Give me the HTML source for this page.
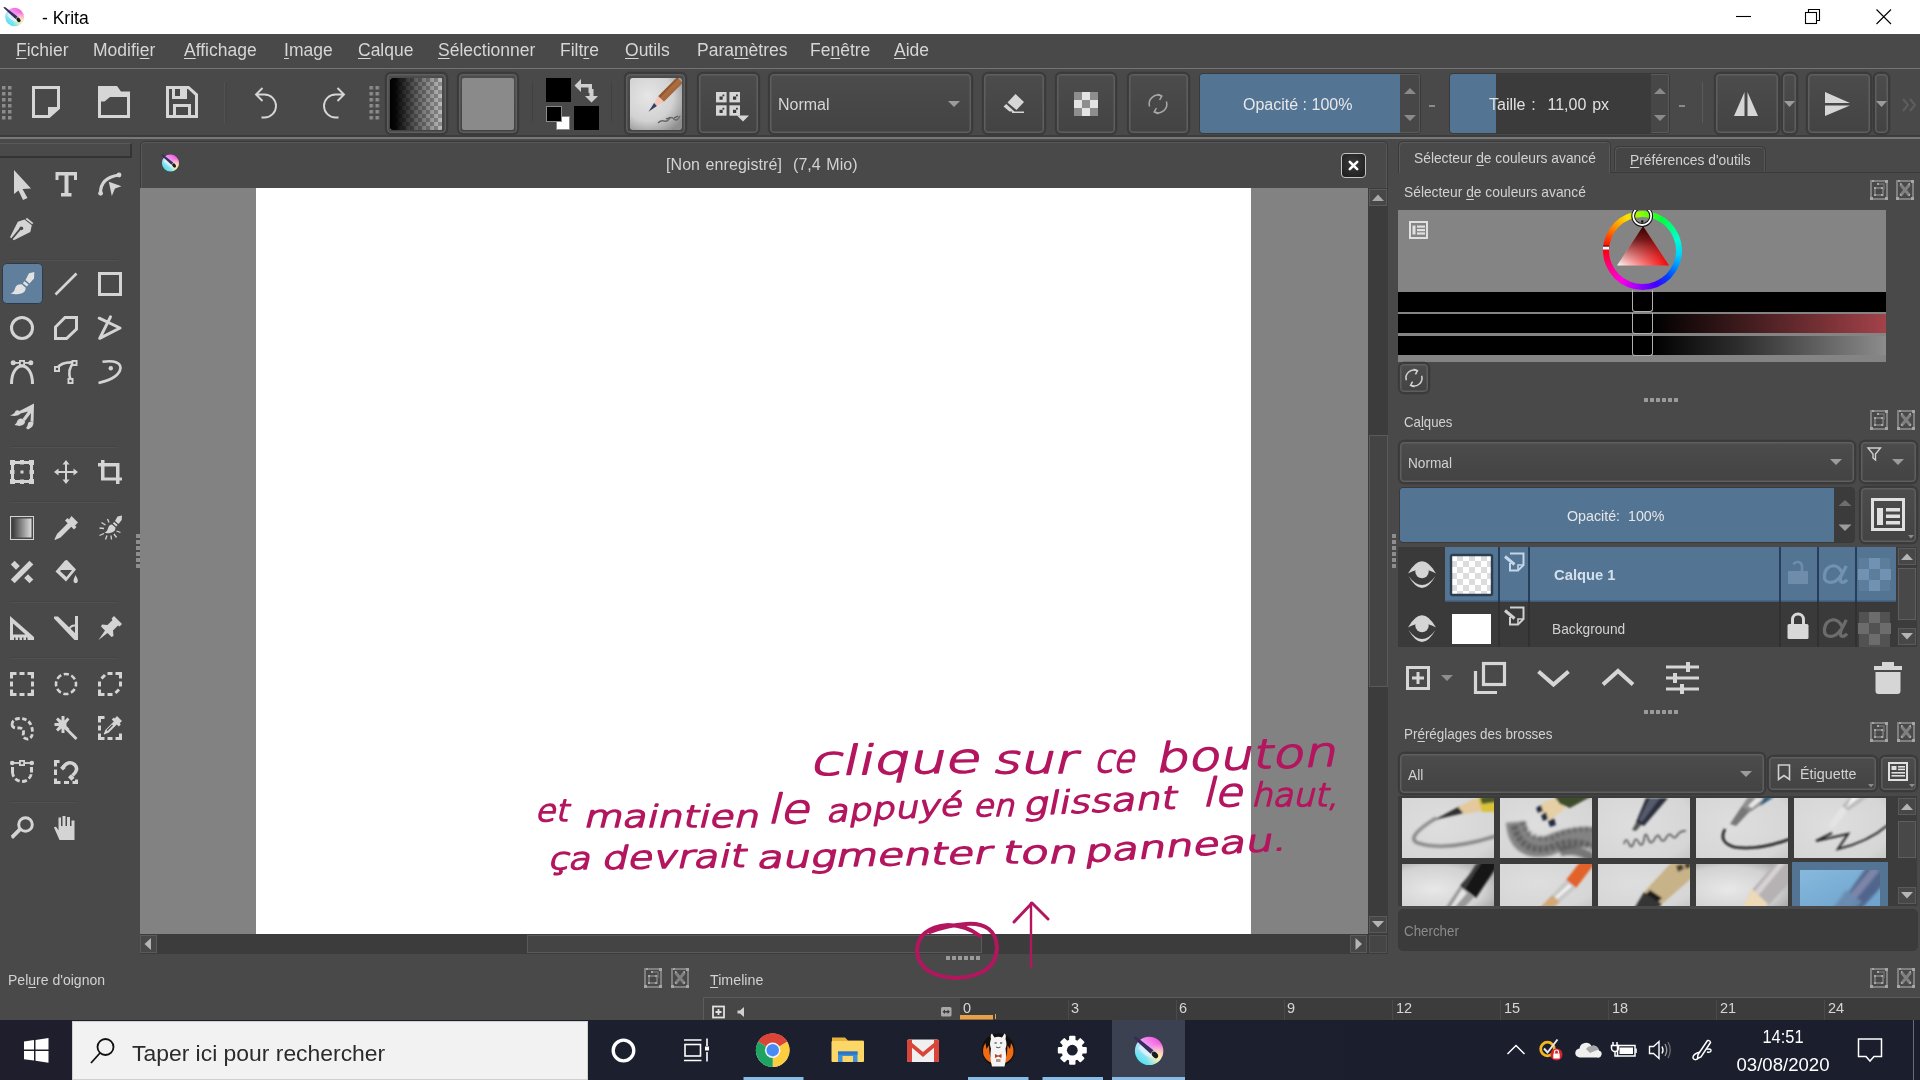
<!DOCTYPE html>
<html lang="fr">
<head>
<meta charset="utf-8">
<title>- Krita</title>
<style>
*{box-sizing:border-box;margin:0;padding:0}
html,body{width:1920px;height:1080px;overflow:hidden;background:#494949}
body{will-change:transform;font-family:"Liberation Sans","DejaVu Sans",sans-serif;color:#d2d2d2;position:relative}
.a{position:absolute}
.t{position:absolute;white-space:nowrap;line-height:1}
svg{position:absolute;overflow:visible}
u{text-decoration:underline;text-underline-offset:2px;text-decoration-thickness:1px}
#titlebar{left:0;top:0;width:1920px;height:34px;background:#fff}
#menubar{left:0;top:34px;width:1920px;height:34px;background:#494949}
.mi{top:42px;font-size:17.5px;color:#d6d6d6}
.btn{position:absolute;border:1px solid #3c3c3c;border-radius:5px;background:linear-gradient(#4c4c4c,#434343);box-shadow:0 0 0 1.2px #3a3a3a,inset 0 0 0 1.5px #5e5e5e}
.dk{background:#3b3b3b}
.blue{background:#537493}
</style>
</head>
<body>
<!-- ===== Title bar ===== -->
<div class="a" id="titlebar">
  <svg style="left:2px;top:4px" width="24" height="24" viewBox="0 0 24 24">
    <defs>
      <linearGradient id="kg1" x1="0.2" y1="0.9" x2="0.8" y2="0.1"><stop offset="0" stop-color="#4fe3ef"/><stop offset=".45" stop-color="#b6e2f6"/><stop offset=".7" stop-color="#f58bf0"/><stop offset="1" stop-color="#f45ce0"/></linearGradient>
      <radialGradient id="kg2" cx=".85" cy=".7" r=".45"><stop offset="0" stop-color="#fff3a0"/><stop offset="1" stop-color="#fff3a0" stop-opacity="0"/></radialGradient>
    </defs>
    <circle cx="12.5" cy="13" r="9.3" fill="url(#kg1)"/>
    <circle cx="12.5" cy="13" r="9.3" fill="url(#kg2)"/>
    <path d="M5 11 Q9 17 15 18 L17 15 Q11 13 7 9Z" fill="#fff" opacity=".55"/>
    <path d="M1.2 3.6 L3 3 L15.5 12.5 L13.5 15 Z" fill="#3b2a5c"/>
    <ellipse cx="16.5" cy="15.8" rx="1.8" ry="2.6" transform="rotate(-40 16.5 15.8)" fill="#1b1b24"/>
  </svg>
  <span class="t" style="left:42px;top:9.8px;font-size:17.5px;color:#000">- Krita</span>
  <svg style="left:1730px;top:0" width="190" height="34" viewBox="1730 0 190 34" fill="none" stroke="#000" stroke-width="1.1">
    <path d="M1736 16.5H1751"/>
    <rect x="1805.5" y="12.5" width="11" height="11"/>
    <path d="M1808.5 12.5V9.5H1819.5V20.5H1816.5"/>
    <path d="M1876.5 9.5L1891 24M1891 9.5L1876.5 24"/>
  </svg>
</div>
<!-- ===== Menu bar ===== -->
<div class="a" id="menubar"></div>
<span class="t mi" style="left:16px"><u>F</u>ichier</span>
<span class="t mi" style="left:93px">Modifi<u>e</u>r</span>
<span class="t mi" style="left:184px"><u>A</u>ffichage</span>
<span class="t mi" style="left:284px"><u>I</u>mage</span>
<span class="t mi" style="left:358px"><u>C</u>alque</span>
<span class="t mi" style="left:438px"><u>S</u>électionner</span>
<span class="t mi" style="left:560px">Filt<u>r</u>e</span>
<span class="t mi" style="left:625px"><u>O</u>utils</span>
<span class="t mi" style="left:697px">Para<u>m</u>ètres</span>
<span class="t mi" style="left:810px">Fe<u>n</u>être</span>
<span class="t mi" style="left:894px"><u>A</u>ide</span>
<div class="a" style="left:0;top:68px;width:1920px;height:1px;background:#747474"></div>
<div class="a" style="left:0;top:135px;width:1920px;height:2px;background:#3c3c3c"></div>
<div class="a" style="left:0;top:137px;width:1920px;height:2px;background:#787878"></div>
<!-- ===== Main toolbar ===== -->
<svg style="left:0;top:68px" width="1920" height="70" viewBox="0 68 1920 70">
  <defs>
    <pattern id="hdots" x="1" y="85" width="6" height="6" patternUnits="userSpaceOnUse"><rect x="1" y="1" width="3.5" height="3.5" fill="#8c8c8c"/></pattern>
    <linearGradient id="gradbtn" x1="0" x2="1"><stop offset="0" stop-color="#0b0b0b"/><stop offset=".45" stop-color="#333" /><stop offset="1" stop-color="#8a8a8a"/></linearGradient>
    <pattern id="chk8" x="390" y="78" width="8" height="8" patternUnits="userSpaceOnUse"><rect width="4" height="4" fill="#fff" opacity=".42"/><rect x="4" y="4" width="4" height="4" fill="#fff" opacity=".42"/></pattern>
    <linearGradient id="chkfade" x1="0" x2="1"><stop offset="0" stop-color="#000" stop-opacity="1"/><stop offset=".12" stop-color="#000" stop-opacity=".95"/><stop offset=".5" stop-color="#000" stop-opacity=".5"/><stop offset="1" stop-color="#000" stop-opacity="0"/></linearGradient>
  </defs>
  <rect x="1" y="85" width="12" height="36" fill="url(#hdots)"/>
  <g transform="translate(1.5 0)"><rect x="367" y="85" width="12" height="36" fill="url(#hdots)"/></g>
  <!-- new -->
  <path d="M33.5 87.5H58.5V108L49 116.5H33.5Z" fill="none" stroke="#d6d6d6" stroke-width="3"/>
  <path d="M48 107H59L48 117Z" fill="#d6d6d6"/>
  <!-- open -->
  <path d="M98 86H117L121 91.5H130V118H98Z M101 101.5V115H127V97H110L104.5 101.5Z" fill="#d6d6d6" fill-rule="evenodd"/>
  <!-- save -->
  <path d="M166 86H189L198 94V118H166Z M169 89V115H173V104H191V115H195V95.5L188 89H187V99H172V89Z M175 89V96H180V89Z M176 107V115H188V107Z" fill="#d6d6d6" fill-rule="evenodd"/>
  <rect x="224.500" y="82" width="1" height="41" fill="#5a5a5a"/>
  <rect x="225.500" y="82" width="1" height="41" fill="#404040"/>
  <!-- undo / redo -->
  <g fill="none" stroke="#d6d6d6" stroke-width="1.9">
    <path d="M262.500 88L256 94.500L262.500 101M256.500 94.500H264.500A11.500 11.500 0 0 1 264.500 117.500H261.500"/>
    <path d="M337.500 88L344 94.500L337.500 101M343.500 94.500H335.500A11.500 11.500 0 0 0 335.500 117.500H338.500"/>
  </g>
  <rect x="532" y="82" width="1" height="41" fill="#414141"/>
  <rect x="611" y="82" width="1" height="41" fill="#414141"/>
  <rect x="1702" y="82" width="1" height="41" fill="#5a5a5a"/>
</svg>
<!-- gradient button -->
<div class="btn" style="left:386px;top:73px;width:61px;height:61px"></div>
<svg style="left:390px;top:78px" width="52" height="52" viewBox="390 78 52 52"><rect x="390" y="78" width="52" height="52" rx="2" fill="#8c8c8c"/><rect x="390" y="78" width="52" height="52" fill="url(#chk8)"/><rect x="390" y="78" width="52" height="52" rx="2" fill="url(#chkfade)"/></svg>
<!-- pattern button -->
<div class="btn" style="left:458px;top:73px;width:60px;height:61px"></div>
<div class="a" style="left:462px;top:78px;width:52px;height:52px;background:#8a8a8a;border-radius:2px"></div>
<!-- fg/bg colours -->
<div class="a" style="left:546px;top:78px;width:25px;height:24px;background:#000"></div>
<div class="a" style="left:574px;top:106px;width:25px;height:24px;background:#000"></div>
<svg style="left:572px;top:76px" width="28" height="28" viewBox="572 76 28 28"><path d="M574.500 85.500L581 79V84H592V93H588.500V87.500H581V92Z M598 96L591.500 102.500L585 96H589.500V89H593.500V96Z" fill="#cfcfcf"/></svg>
<div class="a" style="left:556px;top:116px;width:14px;height:14px;background:#fff;border:1px solid #8a8a8a"></div>
<div class="a" style="left:546px;top:106px;width:16px;height:16px;background:#000;border:1.500px solid #8a8a8a"></div>
<!-- brush preset button -->
<div class="btn" style="left:625px;top:73px;width:61px;height:61px"></div>
<svg style="left:630px;top:78px;overflow:hidden;border-radius:2px" width="52" height="52" viewBox="0 0 52 52">
  <defs><radialGradient id="bpbg" cx=".35" cy=".35" r=".8"><stop offset="0" stop-color="#e6e6e6"/><stop offset=".6" stop-color="#d2d2d2"/><stop offset="1" stop-color="#8e8e8e"/></radialGradient>
  <linearGradient id="pencilw" x1="0" y1="0" x2="1" y2="1"><stop offset="0" stop-color="#c98a55"/><stop offset="1" stop-color="#8a4f2a"/></linearGradient></defs>
  <rect width="52" height="52" rx="2" fill="url(#bpbg)"/>
  <path d="M52.830 4.830L47.170 -0.830L28.170 18.170L33.830 23.830Z" fill="url(#pencilw)"/>
  <path d="M50 -1L47.170 -0.830L28.170 18.170L30 20Z" fill="#7a4422" opacity=".55"/>
  <path d="M33.830 23.830L28.170 18.170L24.100 25.100L26.900 27.900Z" fill="#f3c4b8"/>
  <path d="M26.900 27.900L24.100 25.100L18.500 33.700Z" fill="#33415e"/>
  <path d="M28 45q3 -3 6 -2t5 -2t5 0t6 -3" fill="none" stroke="#6a6a6a" stroke-width="1.500"/>
  <path d="M36 41l4 -1.500M44 40l4 -2" fill="none" stroke="#555" stroke-width="1.300"/>
</svg>
<!-- workspace chooser -->
<div class="btn" style="left:698px;top:73px;width:61px;height:61px"></div>
<svg style="left:714px;top:92px" width="36" height="32" viewBox="714 92 36 32">
  <g fill="#d6d6d6"><rect x="716" y="92" width="10.600" height="10.400"/><rect x="729.400" y="92" width="10.600" height="10.400"/><rect x="716" y="105.300" width="10.600" height="10.400"/><rect x="729.400" y="105.300" width="10.600" height="10.400"/><path d="M737 115.500H749L743 121.500Z"/></g>
  <g fill="#3a3a3a"><rect x="719.500" y="96.500" width="3.200" height="3.200"/><rect x="733" y="96.500" width="3.200" height="3.200"/><rect x="719.500" y="109.800" width="3.200" height="3.200"/><rect x="733" y="109.800" width="3.200" height="3.200"/><rect x="722.500" y="94.500" width="1.800" height="1.800"/><rect x="736" y="94.500" width="1.800" height="1.800"/><rect x="722.500" y="107.800" width="1.800" height="1.800"/><rect x="736" y="107.800" width="1.800" height="1.800"/></g>
</svg>
<!-- blend mode combobox -->
<div class="btn" style="left:769px;top:73px;width:203px;height:61px"></div>
<span class="t" style="left:778px;top:96.5px;font-size:16px;color:#d6d6d6">Normal</span>
<svg style="left:948px;top:101px" width="12" height="6"><path d="M0 0H12L6 6Z" fill="#9c9c9c"/></svg>
<!-- eraser -->
<div class="btn" style="left:983px;top:73px;width:62px;height:61px"></div>
<svg style="left:1003px;top:94px" width="22" height="20" viewBox="0 0 22 20"><path d="M12.500 0L21 8L13.500 16L4.500 8.500Z M3.200 10L11.500 17.500H6.500L0.500 12.500Z M9 17.500H21V19H9Z" fill="#d6d6d6"/></svg>
<!-- preserve alpha -->
<div class="btn" style="left:1056px;top:73px;width:60px;height:61px"></div>
<svg style="left:1074px;top:92px" width="24" height="24" viewBox="0 0 24 24"><rect width="24" height="24" fill="#8e8e8e"/><g fill="#e4e4e4"><rect x="8" width="8" height="8"/><rect y="8" width="8" height="8"/><rect x="16" y="8" width="8" height="8"/><rect x="8" y="16" width="8" height="8"/></g></svg>
<!-- reload -->
<div class="btn" style="left:1128px;top:73px;width:61px;height:61px"></div>
<svg style="left:1147px;top:93px" width="22" height="22" viewBox="0 0 22 22" fill="none" stroke="#a8a8a8" stroke-width="1.500"><path d="M2.600 13.500A8.700 8.700 0 0 1 14.500 3M19.400 8.500A8.700 8.700 0 0 1 7.500 19"/><path d="M10.500 1.200L14.800 3L12.600 7M11.500 20.800L7.200 19L9.400 15"/></svg>
<!-- opacity slider -->
<div class="a" style="left:1199px;top:73px;width:222px;height:61px;border:1px solid #3a3a3a;border-radius:4px;background:#3b3b3b"></div>
<div class="a blue" style="left:1200px;top:74px;width:200px;height:59px;border-radius:3px 0 0 3px"></div>
<div class="a" style="left:1400px;top:74px;width:20px;height:59px;background:#474747;border-radius:0 3px 3px 0;box-shadow:inset -1px 0 0 #5a5a5a,inset 0 1px 0 #5a5a5a,inset 0 -1px 0 #5a5a5a"></div>
<span class="t" style="left:1243px;top:97px;font-size:16px;color:#e8e8e8">Opacité : 100%</span>
<svg style="left:1403px;top:88px" width="14" height="34"><path d="M1 6H13L7 0Z M1 27H13L7 33Z" fill="#8a8a8a"/></svg>
<div class="a" style="left:1429px;top:105px;width:6px;height:1.500px;background:#8a8a8a"></div>
<!-- size slider -->
<div class="a" style="left:1449px;top:73px;width:221px;height:61px;border:1px solid #3a3a3a;border-radius:4px;background:#3b3b3b"></div>
<div class="a blue" style="left:1450px;top:74px;width:46px;height:59px;border-radius:3px 0 0 3px"></div>
<div class="a" style="left:1651px;top:74px;width:18px;height:59px;background:#474747;border-radius:0 3px 3px 0;box-shadow:inset -1px 0 0 #5a5a5a,inset 0 1px 0 #5a5a5a,inset 0 -1px 0 #5a5a5a"></div>
<span class="t" style="left:1489px;top:97px;font-size:16px;color:#e0e0e0;word-spacing:1.4px">Taille :&nbsp; 11,00 px</span>
<svg style="left:1653px;top:88px" width="14" height="34"><path d="M1 6H13L7 0Z M1 27H13L7 33Z" fill="#8a8a8a"/></svg>
<div class="a" style="left:1679px;top:105px;width:6px;height:1.500px;background:#8a8a8a"></div>
<!-- mirror buttons -->
<div class="btn" style="left:1715px;top:73px;width:64px;height:61px"></div>
<svg style="left:1733px;top:92px" width="26" height="25" viewBox="0 0 26 25"><path d="M11.500 0V24H1Z M14.500 0V24H25Z" fill="#d6d6d6"/></svg>
<div class="btn" style="left:1782px;top:73px;width:15px;height:61px"></div>
<svg style="left:1784px;top:101px" width="11" height="6"><path d="M0 0H11L5.500 6Z" fill="#9c9c9c"/></svg>
<div class="btn" style="left:1807px;top:73px;width:64px;height:61px"></div>
<svg style="left:1825px;top:92px" width="26" height="25" viewBox="0 0 26 25"><path d="M0 0L25 11H0Z M0 24L25 13.500H0Z" fill="#d6d6d6"/></svg>
<div class="btn" style="left:1874px;top:73px;width:15px;height:61px"></div>
<svg style="left:1876px;top:101px" width="11" height="6"><path d="M0 0H11L5.500 6Z" fill="#9c9c9c"/></svg>
<svg style="left:1902px;top:98px" width="14" height="14" fill="none" stroke="#5e5e5e" stroke-width="2"><path d="M1 1L6 7L1 13M8 1L13 7L8 13"/></svg>
<!-- ===== Left toolbox ===== -->
<div class="a" style="left:0;top:143px;width:132px;height:15px;border-right:2px solid #343434;border-bottom:2px solid #343434;border-top:1px solid #5a5a5a;background:#4a4a4a"></div>
<div class="a" style="left:1.5px;top:263px;width:41px;height:41px;border-radius:4.5px;background:#607f9d;border:1.500px solid #2e3a48"></div>
<svg style="left:0;top:160px" width="140" height="700" viewBox="0 160 140 700">
<g fill="#444" >
  <rect x="10" y="259" width="108" height="1"/><rect x="10" y="446" width="108" height="1"/><rect x="10" y="501" width="108" height="1"/><rect x="10" y="601" width="108" height="1"/><rect x="10" y="657" width="108" height="1"/><rect x="10" y="801" width="66" height="1"/>
</g>
<g fill="#515151" >
  <rect x="10" y="260" width="108" height="1"/><rect x="10" y="447" width="108" height="1"/><rect x="10" y="502" width="108" height="1"/><rect x="10" y="602" width="108" height="1"/><rect x="10" y="658" width="108" height="1"/><rect x="10" y="802" width="66" height="1"/>
</g>
<g fill="#d4d4d4" stroke="none">
<!-- row 1 : y=173 -->
<g transform="translate(10,173)"><path d="M4 -3V21L8.500 17.500L13 27L17.500 25L12.500 16L21 15.500Z"/></g>
<g transform="translate(54,173)"><path d="M1.500 -1H23V7H20V2.500H14.500V20H17.500V23.500H7V20H10.500V2.500H4.500V7H1.500Z"/></g>
<g transform="translate(98,173)"><path d="M2.500 20Q2.500 4.500 21 2" fill="none" stroke="#d4d4d4" stroke-width="3.200"/><circle cx="2.600" cy="20.300" r="2.400"/><circle cx="21" cy="2" r="2.400"/><path d="M10.800 8.800L23.500 13.300L17 15.500L13.800 23Z"/></g>
<!-- row 2 : y=217 -->
<g transform="translate(10,217)"><path d="M16.800 0.800L23.300 5.900L22.200 7.300L15.700 2.200Z"/><path d="M14.500 2.600L21.800 8.300L20.300 15L3.800 23.200L2.700 22.300L11.800 11.400L10.400 10.300L1.300 21.200L0 20.200L7.800 4.800Z"/><circle cx="11.300" cy="11.300" r="1.900" fill="#494949"/></g>
<!-- row 3 : y=272 (brush selected) -->
<g transform="translate(10,272)" fill="#e2e2e2"><path d="M19 1.200L24.300 0L24 6.500L19.500 11.500L15.500 8Z"/><path d="M14.500 9.200L18.500 12.600L16.800 14.600L12.800 11.200Z"/><path d="M11.700 12.200L15.700 15.700Q16 21 9 22Q4 22.600 0.500 21.600Q4.500 20 5 16.500Q6 12 11.700 12.200Z"/></g>
<g transform="translate(54,272)"><path d="M1.500 22.500L22.500 1.500" stroke="#d4d4d4" stroke-width="2.600" fill="none"/></g>
<g transform="translate(98,272)"><rect x="1.500" y="1.500" width="21" height="21" fill="none" stroke="#d4d4d4" stroke-width="3"/></g>
<!-- row 4 : y=316 -->
<g transform="translate(10,316)"><circle cx="12" cy="12" r="10.500" fill="none" stroke="#d4d4d4" stroke-width="3"/></g>
<g transform="translate(54,316)"><path d="M11 1.500H22.500V13L12.500 22.500H1.500V11Z" fill="none" stroke="#d4d4d4" stroke-width="3"/></g>
<g transform="translate(98,316)"><path d="M1.200 2.200L22 12L1.700 22.300L12.500 0.800" fill="none" stroke="#d4d4d4" stroke-width="3" stroke-linecap="round" stroke-linejoin="round"/></g>
<!-- row 5 : y=360 -->
<g transform="translate(10,360)"><path d="M1.500 24C1.500 0 22.500 0 22.500 24" fill="none" stroke="#d4d4d4" stroke-width="3"/><rect x="2" y="2" width="20" height="1.800"/><circle cx="3.200" cy="2.800" r="2.500"/><circle cx="20.800" cy="2.800" r="2.500"/><rect x="9" y="0" width="6" height="6"/><rect x="10.800" y="1.800" width="2.400" height="2.400" fill="#494949"/></g>
<g transform="translate(54,360)"><path d="M3 8Q8 1.500 20 2.500Q13 9 16.500 20" fill="none" stroke="#d4d4d4" stroke-width="2.600"/><rect x="0" y="6" width="6" height="6"/><rect x="1.900" y="7.900" width="2.200" height="2.200" fill="#494949"/><rect x="17.500" y="0" width="6" height="6"/><rect x="19.400" y="1.900" width="2.200" height="2.200" fill="#494949"/><rect x="13.500" y="18" width="6" height="6"/><rect x="15.400" y="19.900" width="2.200" height="2.200" fill="#494949"/></g>
<g transform="translate(98,360)"><path d="M4.500 1.800Q22.500 -0.500 22.500 8Q21.500 18 0.500 23" fill="none" stroke="#d4d4d4" stroke-width="2.600"/><circle cx="12.800" cy="8.300" r="2.200"/></g>
<!-- row 6 : y=404 -->
<g transform="translate(10,404)"><path d="M24 -0.500L23.500 18L20.500 17.500L21 9L15 17L12.500 15L18 7.500L10.500 9.500L9.500 7Z"/><path d="M9.500 6.800L10.800 9.600Q8 13 0 11.500Q5 9.500 5.500 7Q7 5.500 9.500 6.800Z"/><path d="M12.300 14.800L15 17Q15.500 21 9.500 22L4.500 21Q7 19 7.500 16.500Q9.500 13.500 12.300 14.800Z"/><path d="M20.500 17.800L23.500 18.300Q24 23 18 25.500L16 24Q18 21.500 18 19.500Q18.500 17.500 20.500 17.800Z"/></g>
<!-- row 7 : y=460 -->
<g transform="translate(10,460)"><rect x="2.500" y="2.500" width="19" height="19" fill="none" stroke="#d4d4d4" stroke-width="3"/><rect x="0" y="0" width="5" height="5"/><rect x="19" y="0" width="5" height="5"/><rect x="0" y="19" width="5" height="5"/><rect x="19" y="19" width="5" height="5"/><rect x="10" y="0" width="4" height="4.500"/><rect x="10" y="19.500" width="4" height="4.500"/><rect x="0" y="10" width="4.500" height="4"/><rect x="19.500" y="10" width="4.500" height="4"/><rect x="10.500" y="10.500" width="3" height="3"/></g>
<g transform="translate(54,460)"><path d="M12 2V22M2 12H22" stroke="#d4d4d4" stroke-width="2" fill="none"/><path d="M12 0L15.500 4.500H8.500Z M12 24L15.500 19.500H8.500Z M0 12L4.500 8.500V15.500Z M24 12L19.500 8.500V15.500Z"/></g>
<g transform="translate(98,460)"><path d="M3 0V20.500H24V17.500H6.500V0Z"/><path d="M0 3H21.500V24H18V6.500H0Z"/></g>
<!-- row 8 : y=516 -->
<g transform="translate(10,516)"><defs><linearGradient id="tbgrad" x1="0" x2="1"><stop offset="0" stop-color="#3a3a3a"/><stop offset="1" stop-color="#dcdcdc"/></linearGradient></defs><rect x="0.500" y="0.500" width="23" height="23" fill="none" stroke="#d4d4d4" stroke-width="1"/><rect x="2.500" y="2.500" width="19" height="19" fill="url(#tbgrad)"/></g>
<g transform="translate(54,516)"><path d="M17.500 0L24 6.500L21 9.500L22.500 11L20 13.500L17.300 10.800L6.500 21.500L1 24L0.500 23.300L3 18L13.700 7.200L11 4.500L13.500 2L15 3.500Z"/></g>
<g transform="translate(98,516)"><path d="M19.500 0.500L24 -0.500L23.700 4L20.500 8L17 5Z"/><path d="M16.200 6L19.600 9L18.300 10.500L14.800 7.600Z"/><path d="M14 8.500L17.500 11.500Q17.500 16 12 17Q9 17.500 6.500 16.800Q9.500 15.500 10 12.500Q10.800 8.700 14 8.500Z"/><g stroke="#d4d4d4" stroke-width="1.300" fill="none"><path d="M7.500 9L3.500 6.500M6 12.500L1.500 12M6 17.500L1.500 19.500M9 19.500L7.500 23.500M13 19.500L13.500 23.500M16 18L18.500 21.500M18.500 15L22.500 16.500M11 6.500L9.500 3"/></g></g>
<!-- row 9 : y=560 -->
<g transform="translate(10,560)"><path d="M19.500 0.800L23.300 4.600L4.600 23.300L0.800 19.500Z"/><path d="M4.600 0.800L9.800 6L6 9.800L0.800 4.600Z"/><path d="M18 14.200L23.300 19.500L19.500 23.300L14.200 18Z"/></g>
<g transform="translate(54,560)"><path d="M11 0.500L13 0L22 9.500L12 21.500L1.500 11.500Z M6 11L12.500 17L18 10H7Z" fill-rule="evenodd"/><path d="M8 3L11 0.500L15 4.500L13.500 6Z" fill="#494949" opacity=".0"/><path d="M21.500 15Q24 19 23.800 21A2 2 0 0 1 19.500 21Q19.500 19 21.500 15Z"/></g>
<!-- row 10 : y=616 -->
<g transform="translate(10,616)"><path d="M0 0L24 21V24H0Z M3 7.500V18.500H15.500Z" fill-rule="evenodd"/><g fill="#494949"><rect x="4" y="21.500" width="1.500" height="2.500"/><rect x="8" y="21.500" width="1.500" height="2.500"/><rect x="12" y="21.500" width="1.500" height="2.500"/><rect x="16" y="21.500" width="1.500" height="2.500"/></g></g>
<g transform="translate(54,616)"><path d="M0 0.500H4L21 17V0H24V24H20.500L0 2.500Z"/><path d="M21 9.500A6 6 0 0 0 15 14" fill="none" stroke="#d4d4d4" stroke-width="1.800"/></g>
<g transform="translate(98,616)"><path d="M16 0L24 8L21.500 10.500L20 9.500L15 14.500L15.500 20L13.500 21L9.500 17L0.500 24L7 14.500L3 10.500L4 8.500L9.500 9L14.500 4L13.500 2.500Z"/></g>
<!-- row 11 : y=672 selection tools -->
<g transform="translate(10,672)" fill="none" stroke="#d4d4d4" stroke-width="3"><path d="M1.500 6.500V1.500H6.500M9.500 1.500H14.500M17.500 1.500H22.500V6.500M22.500 9.500V14.500M22.500 17.500V22.500H17.500M14.500 22.500H9.500M6.500 22.500H1.500V17.500M1.500 14.500V9.500"/></g>
<g transform="translate(54,672)"><circle cx="12" cy="12" r="10" fill="none" stroke="#d4d4d4" stroke-width="2.600" stroke-dasharray="5.200 2.650" stroke-dashoffset="2.600"/></g>
<g transform="translate(98,672)" fill="none" stroke="#d4d4d4" stroke-width="3"><path d="M14.500 1.500H9.500M17.500 1.500H22.500V6.500M22.500 9.500V14.500M14.500 22.500H9.500M6.500 22.500H1.500V17.500M1.500 14.500V9.500M3.500 6.500L7 3M17.500 21L21 17.500"/></g>
<!-- row 12 : y=716 -->
<g transform="translate(10,716)" fill="none" stroke="#d4d4d4" stroke-width="2.800"><path d="M2 9Q2 2.500 10 2.500Q22 3 22.500 16Q22.500 22.500 17 23Q12 22 13.500 17Q14 11.500 8 12Q2.500 12.500 2 9Z" stroke-dasharray="4.500 2.300"/></g>
<g transform="translate(54,716)"><path d="M11 9.500L23.500 22L21.500 24L9 11.500Z"/><path d="M7.500 0V4.500L4 1.500L2 3.500L5 7H0.500V10H5L2 13.500L4 15.500L7.500 12.500V17H10.500V12.500L13.500 15L15.500 13L12.500 10V7L15.500 3.500L13.500 1.500L10.500 4.500V0Z"/></g>
<g transform="translate(98,716)"><g fill="none" stroke="#d4d4d4" stroke-width="3"><path d="M1.500 6.500V1.500H6.500M22.500 17.500V22.500H17.500M14.500 22.500H9.500M6.500 22.500H1.500V17.500M1.500 14.500V9.500"/></g><path d="M19 0L24 5L21.700 7.300L22.800 8.400L20.800 10.400L18.800 8.400L10.500 16.700L6.200 18.500L5.700 18L7.500 13.700L15.800 5.400L13.800 3.400L15.800 1.400L16.800 2.400Z"/><path d="M9 14.500L14.500 9" stroke="#494949" stroke-width="1.200"/></g>
<!-- row 13 : y=760 -->
<g transform="translate(10,760)"><path d="M12 21.500m-9.500 -9.500a9.500 9.500 0 1 0 19 0" fill="none" stroke="#d4d4d4" stroke-width="2.800" stroke-dasharray="5 2.450" stroke-dashoffset="0"/><rect x="1" y="2.100" width="22" height="1.800"/><circle cx="2.200" cy="3" r="2.300"/><circle cx="21.800" cy="3" r="2.300"/><rect x="9" y="0" width="6" height="6"/><rect x="10.800" y="1.800" width="2.400" height="2.400" fill="#494949"/><rect x="1" y="7" width="3" height="5.500"/><rect x="20" y="7" width="3" height="5.500"/></g>
<g transform="translate(54,760)"><g fill="none" stroke="#d4d4d4" stroke-width="3"><path d="M1.500 6.500V1.500H5.500M22.500 19.500V22.500H18.500M15 22.500H10M6.500 22.500H1.500V18.500M1.500 15V9.500"/></g><path d="M9 7.500Q14 0 20.500 4.500Q25.500 9.500 18.500 15.500" fill="none" stroke="#d4d4d4" stroke-width="3.600"/><path d="M8.800 5L11.700 7.900L9 10.600L6.100 7.700Z M17 14.200L20.500 17.700L17.500 20.700L14 17.200Z"/></g>
<!-- row 14 : y=816 -->
<g transform="translate(10,816)"><circle cx="15.500" cy="8.500" r="6.800" fill="none" stroke="#d4d4d4" stroke-width="3"/><path d="M10 12L12 14L3 23L1 21Z" /><path d="M10.500 12.500L2 21" stroke="#d4d4d4" stroke-width="3.400" fill="none"/></g>
<g transform="translate(54,816)"><path d="M4.500 1.500H7V10H8.500V0H11.500V10H13V1H16V10H17.500V4.500H20.500V24H5.500L0 11.500Q1.500 10 3 12L4.500 14.500Z"/></g>
</g>
</svg>
<!-- toolbox / canvas splitter grip -->
<svg style="left:136px;top:534px" width="4" height="36"><g fill="#8e8e8e"><rect y="0" width="4" height="4"/><rect y="6" width="4" height="4"/><rect y="12" width="4" height="4"/><rect y="18" width="4" height="4"/><rect y="24" width="4" height="4"/><rect y="30" width="4" height="4"/></g></svg>
<!-- ===== Document area ===== -->
<div class="a" style="left:140px;top:141px;width:1248px;height:60px;border:1px solid #3a3a3a;border-radius:5px 5px 0 0;box-shadow:inset 1px 1px 0 #585858,inset -1px 0 0 #585858;background:#494949"></div>
<svg style="left:159px;top:151px" width="22" height="22" viewBox="0 0 24 24">
  <circle cx="12.500" cy="13" r="9.300" fill="url(#kg1)"/><circle cx="12.500" cy="13" r="9.300" fill="url(#kg2)"/>
  <path d="M5 11Q9 17 15 18L17 15Q11 13 7 9Z" fill="#fff" opacity=".5"/>
  <path d="M2.500 4.500L4 3.500L15.500 12.500L13.500 15Z" fill="#3b2a5c"/>
  <ellipse cx="16.500" cy="15.800" rx="1.800" ry="2.600" transform="rotate(-40 16.500 15.800)" fill="#1b1b24"/>
</svg>
<span class="t" style="left:666px;top:156.8px;font-size:16px;color:#d2d2d2;word-spacing:1px;letter-spacing:.07px">[Non enregistré]&nbsp; (7,4 Mio)</span>
<div class="a" style="left:1341px;top:153px;width:25px;height:25px;border:1.500px solid #c4c4c4;border-radius:4px;background:radial-gradient(circle at 50% 40%,#3a3a3a,#1c1c1c)"></div>
<svg style="left:1347px;top:159px" width="13" height="13" viewBox="0 0 13 13"><path d="M2.800 2.800L10.200 10.200M10.200 2.800L2.800 10.200" stroke="#fff" stroke-width="2.600" stroke-linecap="round"/></svg>
<!-- canvas -->
<div class="a" style="left:140px;top:188px;width:1228px;height:746px;background:#828282"></div>
<div class="a" style="left:256px;top:188px;width:995px;height:746px;background:#fff"></div>
<!-- v scrollbar -->
<div class="a" style="left:1368px;top:188px;width:20px;height:746px;background:#3c3c3c"></div>
<div class="a" style="left:1369px;top:189px;width:18px;height:17px;border:1px solid #5a5a5a;background:#474747"></div>
<svg style="left:1372px;top:194px" width="12" height="7"><path d="M0 7H12L6 0.500Z" fill="#a8a8a8"/></svg>
<div class="a" style="left:1369px;top:435px;width:18.500px;height:252px;border:1.800px solid #5a5a5a;background:#444"></div>
<div class="a" style="left:1369px;top:916px;width:18px;height:17px;border:1px solid #5a5a5a;background:#474747"></div>
<svg style="left:1372px;top:921px" width="12" height="7"><path d="M0 0H12L6 6.500Z" fill="#b4b4b4"/></svg>
<!-- h scrollbar -->
<div class="a" style="left:140px;top:934px;width:1248px;height:20px;background:#3c3c3c"></div>
<div class="a" style="left:140px;top:935px;width:17px;height:18px;border:1px solid #5a5a5a;background:#474747"></div>
<svg style="left:144px;top:938px" width="8" height="12"><path d="M7 0V12L0.500 6Z" fill="#b4b4b4"/></svg>
<div class="a" style="left:527px;top:935px;width:455px;height:18px;border:1.800px solid #5a5a5a;background:#444"></div>
<div class="a" style="left:1350px;top:935px;width:17px;height:18px;border:1px solid #5a5a5a;background:#474747"></div>
<svg style="left:1355px;top:938px" width="8" height="12"><path d="M0.500 0V12L7 6Z" fill="#b4b4b4"/></svg>
<div class="a" style="left:1369px;top:935px;width:18px;height:18px;border:1px solid #525252;background:#454545"></div>
<!-- bottom splitter grip -->
<svg style="left:946px;top:956px" width="36" height="4"><g fill="#9a9a9a"><rect x="0" width="4" height="4"/><rect x="6" width="4" height="4"/><rect x="12" width="4" height="4"/><rect x="18" width="4" height="4"/><rect x="24" width="4" height="4"/><rect x="30" width="4" height="4"/></g></svg>
<!-- right splitter grip -->
<svg style="left:1392px;top:534px" width="4" height="36"><g fill="#8e8e8e"><rect y="0" width="4" height="4"/><rect y="6" width="4" height="4"/><rect y="12" width="4" height="4"/><rect y="18" width="4" height="4"/><rect y="24" width="4" height="4"/><rect y="30" width="4" height="4"/></g></svg>
<!-- ===== Right dock ===== -->
<style>
.dt{position:absolute;white-space:nowrap;line-height:1;font-size:15px;color:#d2d2d2;transform:scaleX(.92);transform-origin:0 50%}
.lst{background:#3a3a3a}
</style>
<svg width="0" height="0" style="left:0;top:0">
  <defs>
    <g id="ifloat"><rect x="1" y="1" width="16" height="18" fill="none" stroke="#808080" stroke-width="2"/><rect x="5" y="8" width="8" height="7" fill="none" stroke="#808080" stroke-width="1.600"/><path d="M7 4H14V10" fill="none" stroke="#727272" stroke-width="1.400"/><g fill="#a6a6a6"><rect x="2" y="0" width="2" height="2"/><rect x="15" y="0" width="3" height="3"/><rect x="0" y="17" width="3" height="3"/><rect x="15" y="17" width="3" height="3"/><rect x="7" y="3" width="2" height="2"/><rect x="4" y="7" width="2" height="2"/><rect x="11" y="7" width="2" height="2"/><rect x="4" y="14" width="2" height="2"/><rect x="11" y="14" width="2" height="2"/></g></g>
    <g id="iclose"><rect x="1" y="1" width="16" height="18" fill="none" stroke="#808080" stroke-width="2"/><path d="M4.500 4.500L13.500 15.500M13.500 4.500L4.500 15.500" stroke="#808080" stroke-width="3"/><g fill="#a6a6a6"><rect x="2" y="0" width="2" height="2"/><rect x="15" y="0" width="3" height="3"/><rect x="0" y="17" width="3" height="3"/><rect x="15" y="17" width="3" height="3"/><rect x="4" y="3" width="1.500" height="2"/><rect x="12.500" y="3" width="1.500" height="2"/><rect x="4" y="14" width="1.500" height="2"/><rect x="12.500" y="14" width="1.500" height="2"/></g></g>
    <g id="ialpha"><path d="M21 3.500Q18.500 9 16.500 13Q15 18.500 18 18.500Q20 18.500 21.500 16M17.500 10Q14.500 3 9.500 3.500Q3.500 4.500 2.500 12Q2 18.500 7.500 18.500Q13 18.500 16.500 12" fill="none" stroke-width="2.800"/></g>
  </defs>
</svg>
<!-- tabs -->
<div class="a" style="left:1398px;top:172px;width:522px;height:1px;background:#3a3a3a"></div>
<div class="a" style="left:1614px;top:146px;width:152px;height:25px;border:1px solid #3a3a3a;border-bottom:none;border-radius:5px 5px 0 0;box-shadow:inset 1px 1px 0 #575757,inset -1px 0 0 #575757;background:#454545"></div>
<div class="a" style="left:1398px;top:141px;width:213px;height:32px;border:1px solid #3a3a3a;border-bottom:none;border-radius:5px 5px 0 0;box-shadow:inset 1px 1px 0 #5a5a5a,inset -1px 0 0 #5a5a5a;background:#494949"></div>
<span class="dt" style="left:1414px;top:150px">Sélecteur <u>d</u>e couleurs avancé</span>
<span class="dt" style="left:1630px;top:152px"><u>P</u>références d'outils</span>
<!-- colour selector docker -->
<span class="dt" style="left:1404px;top:184px">Sélecteur <u>d</u>e couleurs avancé</span>
<svg style="left:1870px;top:180px" width="18" height="20"><use href="#ifloat"/></svg>
<svg style="left:1896px;top:180px" width="18" height="20"><use href="#iclose"/></svg>
<div class="a" style="left:1398px;top:210px;width:488px;height:152px;background:#848484"></div>
<svg style="left:1409px;top:221px" width="19" height="18" viewBox="0 0 19 18"><rect x="1" y="1" width="17" height="16" fill="none" stroke="#e0e0e0" stroke-width="2"/><rect x="3.500" y="4.500" width="3" height="9" fill="#e0e0e0"/><rect x="8" y="4.500" width="8" height="2.200" fill="#e0e0e0"/><rect x="8" y="8" width="8" height="2.200" fill="#e0e0e0"/><rect x="8" y="11.400" width="8" height="2.200" fill="#e0e0e0"/></svg>
<!-- hue ring -->
<div class="a" style="left:1398px;top:210px;width:488px;height:82px;overflow:hidden">
  <div class="a" style="left:205px;top:0.7px;width:79px;height:79px;border-radius:50%;background:conic-gradient(from 0deg,#80ff00,#00ff40 9%,#00ffd0 20%,#00d0ff 27%,#0040ff 38%,#4000ff 44%,#a000ff 52%,#ff00e0 60%,#ff0080 68%,#ff0000 76%,#ff8000 85%,#ffe000 93%,#80ff00)"></div>
  <div class="a" style="left:211px;top:6.7px;width:67px;height:67px;border-radius:50%;background:#848484"></div>
  <svg style="left:205px;top:1px" width="80" height="80" viewBox="1603 211 80 80">
    <defs><linearGradient id="trir" x1="1617" y1="266" x2="1669" y2="266" gradientUnits="userSpaceOnUse"><stop offset="0" stop-color="#fff"/><stop offset="1" stop-color="#f00"/></linearGradient>
    <linearGradient id="trib" x1="1643" y1="226" x2="1643" y2="266" gradientUnits="userSpaceOnUse"><stop offset="0" stop-color="#2a0000" stop-opacity="1"/><stop offset=".35" stop-color="#500" stop-opacity=".8"/><stop offset="1" stop-color="#a00" stop-opacity="0"/></linearGradient></defs>
    <path d="M1643 226L1669 265.500H1617Z" fill="url(#trir)"/><path d="M1643 226L1669 265.500H1617Z" fill="url(#trib)"/>
    <circle cx="1642.200" cy="216" r="9" fill="none" stroke="#111" stroke-width="3.800"/><circle cx="1642.200" cy="216" r="9" fill="none" stroke="#fff" stroke-width="1.800"/>
    <circle cx="1642.200" cy="221.500" r="1.200" fill="#111"/>
    <rect x="1603" y="246.500" width="6" height="3" fill="#fff"/><rect x="1603" y="245.500" width="6" height="1" fill="#222"/>
  </svg>
</div>
<!-- bars -->
<div class="a" style="left:1398px;top:292px;width:488px;height:20px;background:#000"></div>
<div class="a" style="left:1398px;top:314px;width:488px;height:19px;background:linear-gradient(90deg,#000 0,#000 52%,#3c1a1c 70%,#a34249 100%)"></div>
<div class="a" style="left:1398px;top:336px;width:488px;height:19px;background:linear-gradient(90deg,#000 0,#000 52%,#2e2e2e 70%,#8c8c8c 100%)"></div>
<div class="a" style="left:1631.500px;top:290px;width:21.500px;height:21.500px;border:1.500px solid #b0b0b0;border-top:none;border-radius:0 0 3px 3px"></div>
<div class="a" style="left:1631.500px;top:313px;width:21.500px;height:20.500px;border:1.500px solid #b0b0b0;border-top:none;border-radius:0 0 3px 3px"></div>
<div class="a" style="left:1631.500px;top:335px;width:21.500px;height:20.500px;border:1.500px solid #b0b0b0;border-top:none;border-radius:0 0 3px 3px"></div>
<div class="btn" style="left:1399px;top:363px;width:30px;height:30px"></div>
<svg style="left:1404px;top:368px" width="20" height="20" viewBox="0 0 22 22" fill="none" stroke="#d0d0d0" stroke-width="1.700"><path d="M2.600 13.500A8.700 8.700 0 0 1 14.500 3M19.400 8.500A8.700 8.700 0 0 1 7.500 19"/><path d="M10.500 1.200L14.800 3L12.600 7M11.500 20.800L7.200 19L9.400 15"/></svg>
<svg style="left:1644px;top:398px" width="36" height="4"><g fill="#9a9a9a"><rect x="0" width="4" height="4"/><rect x="6" width="4" height="4"/><rect x="12" width="4" height="4"/><rect x="18" width="4" height="4"/><rect x="24" width="4" height="4"/><rect x="30" width="4" height="4"/></g></svg>
<!-- ===== Layers docker ===== -->
<span class="dt" style="left:1404px;top:414px;transform:scaleX(.88)">Ca<u>l</u>ques</span>
<svg style="left:1870px;top:410px" width="18" height="20"><use href="#ifloat"/></svg>
<svg style="left:1897px;top:410px" width="18" height="20"><use href="#iclose"/></svg>
<div class="btn" style="left:1399px;top:441px;width:456px;height:42px"></div>
<span class="dt" style="left:1408px;top:455px;transform:scaleX(.91)">Normal</span>
<svg style="left:1830px;top:459px" width="12" height="6"><path d="M0 0H12L6 6Z" fill="#9c9c9c"/></svg>
<div class="btn" style="left:1860px;top:441px;width:57px;height:42px"></div>
<svg style="left:1867px;top:447px" width="15" height="15" viewBox="0 0 15 15"><path d="M1 1H13.500L8.500 7V13L6 11V7Z" fill="none" stroke="#d0d0d0" stroke-width="1.400"/></svg>
<svg style="left:1892px;top:459px" width="12" height="6"><path d="M0 0H12L6 6Z" fill="#9c9c9c"/></svg>
<!-- opacity -->
<div class="a" style="left:1399px;top:487px;width:456px;height:56px;border:1px solid #3a3a3a;border-radius:4px;background:#3b3b3b"></div>
<div class="a blue" style="left:1400px;top:488px;width:434px;height:54px;border-radius:3px 0 0 3px"></div>
<span class="dt" style="left:1567px;top:508px;color:#e6e6e6;transform:scaleX(.95)">Opacité:&nbsp; 100%</span>
<svg style="left:1838px;top:500px" width="14" height="32"><path d="M0.500 6H13.500L7 0Z" fill="#6e6e6e"/><path d="M0.500 24.500H13.500L7 31Z" fill="#9c9c9c"/></svg>
<div class="btn" style="left:1860px;top:487px;width:57px;height:56px"></div>
<svg style="left:1871px;top:498px" width="34" height="33" viewBox="0 0 34 33"><rect x="1.500" y="1.500" width="31" height="30" fill="none" stroke="#e0e0e0" stroke-width="3"/><rect x="6" y="10" width="6" height="17" fill="#e0e0e0"/><rect x="15" y="10" width="14" height="3.500" fill="#e0e0e0"/><rect x="15" y="16.500" width="14" height="3.500" fill="#e0e0e0"/><rect x="15" y="23" width="14" height="3.500" fill="#e0e0e0"/></svg>
<svg style="left:1908px;top:535px" width="6" height="4"><path d="M0 0H6L3 3.500Z" fill="#8a8a8a"/></svg>
<!-- list -->
<div class="a lst" style="left:1398px;top:547px;width:519px;height:100px"></div>
<div class="a blue" style="left:1445px;top:547px;width:451px;height:55px;box-shadow:inset 0 -1.500px 0 #3e5b78"></div>

<div class="a" style="left:1498px;top:547px;width:1.500px;height:55px;background:rgba(24,44,72,.75)"></div><div class="a" style="left:1498px;top:602px;width:1.500px;height:45px;background:rgba(40,40,40,.5)"></div>
<div class="a" style="left:1528px;top:547px;width:1.500px;height:55px;background:rgba(24,44,72,.75)"></div><div class="a" style="left:1528px;top:602px;width:1.500px;height:45px;background:rgba(40,40,40,.5)"></div>
<div class="a" style="left:1779px;top:547px;width:1.500px;height:55px;background:rgba(24,44,72,.75)"></div><div class="a" style="left:1779px;top:602px;width:1.500px;height:45px;background:rgba(40,40,40,.5)"></div>
<div class="a" style="left:1817px;top:547px;width:1.500px;height:55px;background:rgba(24,44,72,.75)"></div><div class="a" style="left:1817px;top:602px;width:1.500px;height:45px;background:rgba(40,40,40,.5)"></div>
<div class="a" style="left:1855px;top:547px;width:1.500px;height:55px;background:rgba(24,44,72,.75)"></div><div class="a" style="left:1855px;top:602px;width:1.500px;height:45px;background:rgba(40,40,40,.5)"></div>
<svg style="left:1398px;top:547px" width="500" height="100" viewBox="1398 547 500 100">
  <defs>
    <g id="ieye"><path d="M0 12.500Q14 -12 28 12.500Q14 4.500 0 12.500Z" fill="#d4d4d4"/><circle cx="14" cy="10.500" r="6.700" fill="#d4d4d4"/><path d="M0.500 15Q14 39 27.500 15Q14 33 0.500 15Z" fill="#d4d4d4"/></g>
    <pattern id="chk7" x="1451" y="555" width="12" height="12" patternUnits="userSpaceOnUse"><rect width="12" height="12" fill="#fff"/><rect x="6" width="6" height="6" fill="#dcdcdc"/><rect y="6" width="6" height="6" fill="#dcdcdc"/></pattern>
    <g id="inline"><path d="M6 1.500H19.500V13L14 18.500H6V11" fill="none" stroke-width="2"/><path d="M14 18.500V13H19.500" fill="none" stroke-width="1.600"/><path d="M1 4.500L10.500 12.500" stroke-width="3"/></g>
    <g id="ichk3"><rect width="33" height="33" fill="#000" opacity=".0"/><rect x="11" y="0" width="11" height="11"/><rect x="0" y="11" width="11" height="11"/><rect x="22" y="11" width="11" height="11"/><rect x="11" y="22" width="11" height="11"/></g>
  </defs>
  <use href="#ieye" x="1408" y="561"/>
  <use href="#ieye" x="1408" y="615"/>
  <rect x="1451" y="555" width="41" height="40" rx="1.500" fill="url(#chk7)" stroke="#2c3e52" stroke-width="2.400"/>
  <rect x="1452" y="614" width="39" height="30" fill="#fff"/>
  <use href="#inline" x="1504" y="552" stroke="#c4d6e8"/>
  <use href="#inline" x="1504" y="606" stroke="#d0d0d0"/>
  <!-- unlocked lock (dim) -->
  <g fill="#6f8dab"><rect x="1788" y="571" width="20" height="13" rx="1"/><path d="M1802 571V566A4.500 4.500 0 0 0 1793.500 564.500" fill="none" stroke="#6f8dab" stroke-width="2.500"/></g>
  <g transform="translate(1821.500 562) scale(1.18 1.1)"><use href="#ialpha" stroke="#7391b0"/></g>
  <g fill="#7b9cbd" opacity=".75"><rect x="1859" y="558" width="31" height="33" fill="#5f80a0"/><use href="#ichk3" x="1858" y="558"/></g>
  <!-- locked lock -->
  <g fill="#d8d8d8"><rect x="1787.500" y="624" width="21" height="15" rx="1.500"/><path d="M1792.500 624V619.500A5.500 5.500 0 0 1 1803.500 619.500V624" fill="none" stroke="#d8d8d8" stroke-width="3"/></g>
  <g transform="translate(1821.500 616) scale(1.18 1.1)"><use href="#ialpha" stroke="#6c6c6c"/></g>
  <g fill="#6c6c6c"><rect x="1859" y="612" width="31" height="35" fill="#525252"/><use href="#ichk3" x="1858" y="612"/></g>
</svg>
<span class="t" style="left:1554px;top:567px;font-size:15px;font-weight:700;color:#d4e0ec;transform:scaleX(.985);transform-origin:0 50%">Calque 1</span>
<span class="dt" style="left:1552px;top:621px;transform:scaleX(.915)">Background</span>
<!-- list scrollbar -->
<div class="a" style="left:1897px;top:547px;width:20px;height:100px;background:#3c3c3c"></div>
<div class="a" style="left:1898px;top:548px;width:18px;height:17px;border:1px solid #5a5a5a;background:#474747"></div>
<svg style="left:1901px;top:553px" width="12" height="7"><path d="M0 7H12L6 0.500Z" fill="#b4b4b4"/></svg>
<div class="a" style="left:1898px;top:568px;width:18px;height:52px;border:1px solid #5e5e5e;background:#484848"></div>
<div class="a" style="left:1898px;top:628px;width:18px;height:17px;border:1px solid #5a5a5a;background:#474747"></div>
<svg style="left:1901px;top:633px" width="12" height="7"><path d="M0 0H12L6 6.500Z" fill="#b4b4b4"/></svg>
<!-- bottom buttons -->
<svg style="left:1398px;top:655px" width="522" height="46" viewBox="1398 655 522 46">
  <g fill="none" stroke="#d6d6d6">
    <rect x="1407.500" y="667.500" width="21" height="21" stroke-width="3"/><path d="M1418 672V684M1412 678H1424" stroke-width="3"/>
    <path d="M1475.500 671V692.500H1497" stroke-width="3.200"/><rect x="1483.500" y="663.500" width="21" height="21" stroke-width="3.200"/>
    <path d="M1538.500 671.500L1553.500 684.500L1568.500 671.500" stroke-width="4"/>
    <path d="M1603 684.500L1618 671L1633 684.500" stroke-width="4"/>
    <path d="M1666 667H1699M1666 678H1699M1666 689H1699" stroke-width="3"/>
    <path d="M1688 662V672M1675 673V683M1682 684V694" stroke-width="4"/>
  </g>
  <path d="M1441 675H1453L1447 681Z" fill="#8e8e8e"/>
  <g fill="#d6d6d6"><path d="M1874 666H1902V670H1874Z M1882 662H1894V666H1882Z M1875.500 672H1900.500V691Q1900.500 694 1897.500 694H1878.500Q1875.500 694 1875.500 691Z"/></g>
</svg>
<svg style="left:1644px;top:710px" width="36" height="4"><g fill="#9a9a9a"><rect x="0" width="4" height="4"/><rect x="6" width="4" height="4"/><rect x="12" width="4" height="4"/><rect x="18" width="4" height="4"/><rect x="24" width="4" height="4"/><rect x="30" width="4" height="4"/></g></svg>
<!-- ===== Brush presets docker ===== -->
<span class="dt" style="left:1404px;top:726px;transform:scaleX(.895)">Pr<u>é</u>réglages des brosses</span>
<svg style="left:1870px;top:722px" width="18" height="20"><use href="#ifloat"/></svg>
<svg style="left:1897px;top:722px" width="18" height="20"><use href="#iclose"/></svg>
<div class="btn" style="left:1399px;top:753px;width:366px;height:41px"></div>
<span class="dt" style="left:1408px;top:767px">All</span>
<svg style="left:1740px;top:771px" width="12" height="6"><path d="M0 0H12L6 6Z" fill="#9c9c9c"/></svg>
<div class="btn" style="left:1768px;top:756px;width:109px;height:35px"></div>
<svg style="left:1777px;top:764px" width="14" height="17" viewBox="0 0 14 17"><path d="M1.500 1H12.500V15.500L7 11.500L1.500 15.500Z" fill="none" stroke="#d0d0d0" stroke-width="1.600"/></svg>
<span class="dt" style="left:1800px;top:766px;transform:scaleX(.955)">Éti<u>q</u>uette</span>
<svg style="left:1868px;top:784px" width="6" height="4"><path d="M0 0H6L3 3.500Z" fill="#8a8a8a"/></svg>
<div class="btn" style="left:1880px;top:756px;width:37px;height:35px"></div>
<svg style="left:1888px;top:762px" width="20" height="19" viewBox="0 0 20 19"><rect x="1" y="1" width="18" height="17" fill="none" stroke="#e0e0e0" stroke-width="2"/><rect x="3.500" y="4" width="5" height="4" fill="#e0e0e0"/><rect x="10" y="4" width="7" height="1.600" fill="#e0e0e0"/><rect x="10" y="6.600" width="7" height="1.600" fill="#e0e0e0"/><rect x="3.500" y="10" width="13.500" height="1.600" fill="#e0e0e0"/><rect x="3.500" y="13" width="13.500" height="1.600" fill="#e0e0e0"/></svg>
<svg style="left:1909px;top:784px" width="6" height="4"><path d="M0 0H6L3 3.500Z" fill="#8a8a8a"/></svg>
<!-- preset grid -->
<div class="a" style="left:1398px;top:796px;width:519px;height:110px;background:#3c3c3c"></div>
<div class="a blue" style="left:1792px;top:862px;width:96px;height:44px"></div>
<svg style="left:1398px;top:796px" width="492" height="110" viewBox="1398 796 492 110">
  <defs>
    <filter id="b1" x="-20%" y="-20%" width="140%" height="140%"><feGaussianBlur stdDeviation="0.9"/></filter>
    <filter id="b2" x="-20%" y="-20%" width="140%" height="140%"><feGaussianBlur stdDeviation="1.600"/></filter>
    <radialGradient id="pbg" cx=".4" cy=".45" r=".85"><stop offset="0" stop-color="#dedede"/><stop offset=".75" stop-color="#d6d6d6"/><stop offset="1" stop-color="#c4c4c4"/></radialGradient>
    <radialGradient id="pbg2" cx=".35" cy=".6" r=".9"><stop offset="0" stop-color="#e8e8e8"/><stop offset=".6" stop-color="#d2d2d2"/><stop offset="1" stop-color="#8e8e8e"/></radialGradient>
    <linearGradient id="pblue" x1="0" y1="0" x2="1" y2="1"><stop offset="0" stop-color="#86b9dc"/><stop offset="1" stop-color="#6ea2cc"/></linearGradient>
    <clipPath id="c1"><rect x="1402" y="798" width="92" height="60"/></clipPath>
    <clipPath id="c2"><rect x="1500" y="798" width="92" height="60"/></clipPath>
    <clipPath id="c3"><rect x="1598" y="798" width="92" height="60"/></clipPath>
    <clipPath id="c4"><rect x="1696" y="798" width="92" height="60"/></clipPath>
    <clipPath id="c5"><rect x="1794" y="798" width="92" height="60"/></clipPath>
    <clipPath id="c6"><rect x="1402" y="864" width="92" height="42"/></clipPath>
    <clipPath id="c7"><rect x="1500" y="864" width="92" height="42"/></clipPath>
    <clipPath id="c8"><rect x="1598" y="864" width="92" height="42"/></clipPath>
    <clipPath id="c9"><rect x="1696" y="864" width="92" height="42"/></clipPath>
    <clipPath id="c10"><rect x="1800" y="870" width="80" height="36"/></clipPath>
  </defs>
  <!-- 1 pencil -->
  <g clip-path="url(#c1)"><rect x="1402" y="798" width="92" height="60" fill="url(#pbg)"/>
    <g filter="url(#b2)"><path d="M1436 818Q1404 838 1418 843Q1446 852 1496 836" fill="none" stroke="#6c6c6c" stroke-width="2.600"/></g>
    <g filter="url(#b1)"><path d="M1434 820L1460 806L1464 813Z" fill="#2e2e2e"/><path d="M1458 807L1474 799L1484 797L1482 811L1464 814Z" fill="#e3c99b"/><path d="M1478 798L1496 796V812L1482 812Z" fill="#d8c23a"/><path d="M1480 797L1496 795V802L1482 804Z" fill="#4c5a2a"/></g></g>
  <!-- 2 pencils smudge -->
  <g clip-path="url(#c2)"><rect x="1500" y="798" width="92" height="60" fill="url(#pbg)"/>
    <g filter="url(#b2)"><path d="M1516 822Q1518 852 1548 846Q1572 834 1598 838" fill="none" stroke="#6e6e6e" stroke-width="20" opacity=".8"/><path d="M1514 826Q1522 854 1550 848Q1574 836 1598 850" fill="none" stroke="#3c3c3c" stroke-width="7" opacity=".55" stroke-dasharray="4 2"/><path d="M1522 822Q1530 842 1552 838Q1574 826 1598 830" fill="none" stroke="#444" stroke-width="5" opacity=".5" stroke-dasharray="3 3"/><path d="M1560 852Q1580 846 1596 862" fill="none" stroke="#505050" stroke-width="9" opacity=".7"/></g>
    <g filter="url(#b1)"><path d="M1542 803L1558 797L1566 808L1550 820L1540 812Z" fill="#e6cfa4"/><path d="M1554 796H1592L1570 808L1560 804Z" fill="#3e4e2c"/><path d="M1536 808L1541 805L1543 811L1538 813Z M1541 815L1546 812L1548 819L1543 821Z M1548 821L1554 818L1556 825L1550 827Z" fill="#222a40"/></g></g>
  <!-- 3 pen scribble -->
  <g clip-path="url(#c3)"><rect x="1598" y="798" width="92" height="60" fill="url(#pbg)"/>
    <g filter="url(#b1)"><path d="M1624 844q2 -8 5 0q3 6 5 -2q2 -6 5 1q3 5 5 -3q1 -10 4 -2q2 8 6 2q4 -8 6 -2q3 6 6 0q3 -6 6 -2t6 -2q4 -4 8 -3" fill="none" stroke="#5a5a5a" stroke-width="1.700"/><path d="M1632 830L1637 821L1642 824L1636 831Z" fill="#555"/><path d="M1636 822L1646 798H1668L1644 826Z" fill="#2c2f3c"/><path d="M1650 798H1660L1642 822L1639 820Z" fill="#6a6e80" opacity=".7"/></g></g>
  <!-- 4 nib U -->
  <g clip-path="url(#c4)"><rect x="1696" y="798" width="92" height="60" fill="url(#pbg)"/>
    <g filter="url(#b1)"><path d="M1725 829Q1718 842 1734 847Q1758 851 1790 839" fill="none" stroke="#1c1c1c" stroke-width="2.600"/><path d="M1730 824L1742 806L1750 811L1736 826Z" fill="#777"/><path d="M1742 806L1748 797H1772L1750 812Z" fill="#8e8e8e"/><path d="M1756 798H1764L1752 808L1748 806Z" fill="#e8e8e8"/><path d="M1764 797H1774L1760 806Z" fill="#2a5a7c"/></g></g>
  <!-- 5 silver zigzag -->
  <g clip-path="url(#c5)"><rect x="1794" y="798" width="92" height="60" fill="url(#pbg)"/>
    <g filter="url(#b1)"><path d="M1832 833L1816 841L1848 834L1838 849Q1868 842 1888 825" fill="none" stroke="#2a2a2a" stroke-width="2.200"/><path d="M1828 826L1842 806L1848 810L1834 828Z" fill="#e4e4e4"/><path d="M1842 806L1850 797H1868L1848 811Z" fill="#bdbdbd"/><path d="M1852 797H1860L1846 808Z" fill="#f4f4f4"/></g></g>
  <!-- 6 black pen -->
  <g clip-path="url(#c6)"><rect x="1402" y="864" width="92" height="42" fill="url(#pbg2)"/>
    <g filter="url(#b1)"><path d="M1480 862H1500L1476 898L1460 886Z" fill="#151515"/><path d="M1476 864L1482 862L1465 889L1462 886Z" fill="#3c3c3c"/><path d="M1460 886L1474 897L1462 910H1444Z" fill="#9a9a9a"/><path d="M1462 889L1467 893L1454 908H1450Z" fill="#e4e4e4"/></g></g>
  <!-- 7 orange brush -->
  <g clip-path="url(#c7)"><rect x="1500" y="864" width="92" height="42" fill="url(#pbg)"/>
    <g filter="url(#b1)"><path d="M1580 862H1596L1576 888L1566 880Z" fill="#e2622a"/><path d="M1566 880L1576 888L1560 902L1552 895Z" fill="#c8c8c8"/><path d="M1569 884L1572 886L1557 899L1555 897Z" fill="#f2f2f2"/><path d="M1552 895L1560 902L1548 912H1536Z" fill="#d2a878"/></g></g>
  <!-- 8 tan marker -->
  <g clip-path="url(#c8)"><rect x="1598" y="864" width="92" height="42" fill="url(#pbg)"/>
    <g filter="url(#b1)"><path d="M1672 862H1694V876L1662 904L1644 892Z" fill="#c8b288"/><path d="M1676 866l6 -2l2 5l-6 3Z M1684 864l6 -3l1 6l-5 2Z" fill="#4a4030"/><path d="M1644 892L1662 904L1654 912H1632Z" fill="#353535"/><path d="M1650 890L1662 898L1658 902L1646 894Z" fill="#1e1e1e"/></g></g>
  <!-- 9 grey pencil -->
  <g clip-path="url(#c9)"><rect x="1696" y="864" width="92" height="42" fill="url(#pbg2)"/>
    <g filter="url(#b1)"><path d="M1776 862H1792V880L1768 906H1752L1752 890Z" fill="#b6b2b4"/><path d="M1780 862H1786L1758 896L1754 892Z" fill="#d6d2d4"/><path d="M1752 889L1768 904L1762 912H1740Z" fill="#ecd9b6"/></g></g>
  <!-- 10 selected blue -->
  <g clip-path="url(#c10)"><rect x="1800" y="870" width="80" height="36" fill="url(#pblue)"/>
    <g filter="url(#b2)"><path d="M1866 868H1884V884L1860 910H1836Z" fill="#4a5a80" opacity=".85"/><path d="M1872 868L1880 870L1850 906L1842 904Z" fill="#8a8eb0" opacity=".8"/><path d="M1846 890L1862 902L1850 912H1830Z" fill="#6a8cb0" opacity=".9"/></g></g>
</svg>
<!-- grid scrollbar -->
<div class="a" style="left:1897px;top:796px;width:20px;height:110px;background:#3c3c3c"></div>
<div class="a" style="left:1898px;top:798px;width:18px;height:17px;border:1px solid #5a5a5a;background:#474747"></div>
<svg style="left:1901px;top:803px" width="12" height="7"><path d="M0 7H12L6 0.500Z" fill="#b4b4b4"/></svg>
<div class="a" style="left:1898px;top:821px;width:18px;height:37px;border:1px solid #5e5e5e;background:#484848"></div>
<div class="a" style="left:1898px;top:887px;width:18px;height:17px;border:1px solid #5a5a5a;background:#474747"></div>
<svg style="left:1901px;top:892px" width="12" height="7"><path d="M0 0H12L6 6.500Z" fill="#b4b4b4"/></svg>
<!-- search -->
<div class="a" style="left:1398px;top:909px;width:520px;height:42px;border:1px solid #3a3a3a;border-radius:5px;background:#3b3b3b"></div>
<span class="dt" style="left:1404px;top:923px;color:#8c8c8c;transform:scaleX(.89)">Chercher</span>
<!-- ===== Bottom docks ===== -->
<span class="dt" style="left:8px;top:972px;transform:scaleX(.935)">Pel<u>u</u>re d'oignon</span>
<svg style="left:644px;top:968px" width="18" height="20"><use href="#ifloat"/></svg>
<svg style="left:671px;top:968px" width="18" height="20"><use href="#iclose"/></svg>
<span class="dt" style="left:710px;top:972px;transform:scaleX(.95)"><u>T</u>imeline</span>
<svg style="left:1870px;top:968px" width="18" height="20"><use href="#ifloat"/></svg>
<svg style="left:1897px;top:968px" width="18" height="20"><use href="#iclose"/></svg>
<div class="a" style="left:703px;top:997px;width:1217px;height:23px;border-top:1.500px solid #5c5c5c;border-left:1px solid #5c5c5c;background:#464646"></div>
<div class="a" style="left:960px;top:998px;width:960px;height:22px;background:#3c3c3c"></div>
<svg style="left:703px;top:998px" width="1217" height="22" viewBox="703 998 1217 22">
  <rect x="713" y="1006.500" width="11" height="11" fill="none" stroke="#e0e0e0" stroke-width="1.800"/><path d="M718.500 1009V1015M715.500 1012H721.500" stroke="#e0e0e0" stroke-width="1.800"/>
  <path d="M737.500 1010.500H740L744 1007V1017L740 1013.500H737.500Z" fill="#d0d0d0"/>
  <rect x="941" y="1007" width="10.500" height="9.500" rx="1.500" fill="#a8a8a8"/><path d="M942.500 1011.700L945 1009.500V1011H947.500V1009.500L950 1011.700L947.500 1014V1012.500H945V1014Z" fill="#3a3a3a"/>
  <rect x="960" y="1015" width="33" height="4.500" fill="#e8a049"/><rect x="995" y="1014" width="1" height="5" fill="#e8a049"/>
  <g fill="#4a4a4a"><rect x="1068" y="1000" width="1" height="20"/><rect x="1176" y="1000" width="1" height="20"/><rect x="1284" y="1000" width="1" height="20"/><rect x="1392" y="1000" width="1" height="20"/><rect x="1500" y="1000" width="1" height="20"/><rect x="1608" y="1000" width="1" height="20"/><rect x="1716" y="1000" width="1" height="20"/><rect x="1824" y="1000" width="1" height="20"/></g>
  <g fill="#d6d6d6" font-family="Liberation Sans, sans-serif" font-size="14.500">
    <text x="963" y="1012.500">0</text><text x="1071" y="1012.500">3</text><text x="1179" y="1012.500">6</text><text x="1287" y="1012.500">9</text><text x="1396" y="1012.500">12</text><text x="1504" y="1012.500">15</text><text x="1612" y="1012.500">18</text><text x="1720" y="1012.500">21</text><text x="1828" y="1012.500">24</text>
  </g>
</svg>
<!-- ===== Windows taskbar ===== -->
<div class="a" style="left:0;top:1020px;width:1920px;height:60px;background:linear-gradient(90deg,#1f1e2c 0,#1c1f2e 30%,#1a1e2d 100%)"></div>
<svg style="left:24px;top:1038px" width="25" height="25" viewBox="0 0 25 25"><path d="M0 3.500L10 2.100V11.600H0Z M11.500 1.900L24.500 0V11.600H11.500Z M0 13H10V22.600L0 21.200Z M11.500 13H24.500V24.700L11.500 22.800Z" fill="#fff"/></svg>
<div class="a" style="left:72px;top:1021px;width:516px;height:59px;background:#f2f2f2;border:1.500px solid #d0d0d0"></div>
<svg style="left:90px;top:1037px" width="26" height="28" viewBox="0 0 26 28" fill="none" stroke="#111" stroke-width="1.800"><circle cx="15.500" cy="10" r="8"/><path d="M10 16L1 26"/></svg>
<span class="t" style="left:132px;top:1042px;font-size:22.9px;color:#2b2b2b">Taper ici pour rechercher</span>
<svg style="left:600px;top:1020px" width="620" height="60" viewBox="600 1020 620 60">
  <circle cx="623.500" cy="1050.500" r="10.300" fill="none" stroke="#fff" stroke-width="3.300"/>
  <!-- task view -->
  <g fill="none" stroke="#fff" stroke-width="1.600"><rect x="685" y="1044.500" width="15.500" height="11.500"/><path d="M684 1040H701.500M684 1060.500H701.500M707 1038.500V1046M707 1052V1061.500"/><rect x="705" y="1046.500" width="4" height="4" fill="#fff" stroke="none"/></g>
  <!-- chrome -->
  <g><circle cx="772.700" cy="1050.200" r="16.800" fill="#e8e8e8"/>
    <path d="M772.700 1050.200L758.150 1041.800A16.800 16.800 0 0 1 787.250 1041.800Z" fill="#dc4437"/>
    <path d="M772.700 1050.200L787.250 1041.800A16.800 16.800 0 0 1 772.700 1067Z" fill="#fbcd3f"/>
    <path d="M772.700 1050.200L772.700 1067A16.800 16.800 0 0 1 758.150 1041.800Z" fill="#1ea362"/>
    <path d="M758.150 1041.800A16.800 16.800 0 0 1 787.250 1041.800H772.700Z" fill="#dc4437"/>
    <circle cx="772.700" cy="1050.200" r="7.800" fill="#f4f4f4"/><circle cx="772.700" cy="1050.200" r="6.200" fill="#4a8af4"/></g>
  <rect x="743.500" y="1077" width="60" height="3" fill="#85bce8"/>
  <!-- explorer -->
  <g><path d="M832 1037.500H845L848 1040.500H863.500V1044H832Z" fill="#e8b23a"/><rect x="831.500" y="1041" width="32.500" height="21" rx="1" fill="#fcd767"/><path d="M838 1062V1051.500H857.500V1062H853V1056H842.500V1062Z" fill="#3c8fd8"/><rect x="838" y="1051.500" width="19.500" height="3" fill="#2a74c0"/></g>
  <!-- gmail -->
  <g><rect x="907" y="1039.500" width="32" height="22.500" rx="2" fill="#f0f0f0"/><path d="M907 1041.500Q907 1039.500 909 1039.500H912V1062H909Q907 1062 907 1060Z M939 1041.500Q939 1039.500 937 1039.500H934V1062H937Q939 1062 939 1060Z" fill="#d9453a"/><path d="M908.500 1040L923 1052L937.500 1040L939 1043.500L923 1057L907 1043.500Z" fill="#d9453a"/></g>
  <!-- alpaca -->
  <g><circle cx="998.200" cy="1050" r="16.500" fill="#14100e"/>
    <path d="M983.500 1055Q982 1048 985.500 1043L986.500 1049L989 1045.500L989.500 1053L992 1063Q986 1061 983.500 1055Z M1013 1055Q1014.500 1048 1011 1043L1010 1049L1007.500 1045.500L1007 1053L1004.500 1063Q1010.500 1061 1013 1055Z" fill="#ee6a14"/>
    <path d="M991 1039Q990 1034.500 992 1033.500Q993.500 1036 994.500 1037.500Q998.200 1036 1002 1037.500Q1003 1036 1004.500 1033.500Q1006.500 1034.500 1005.500 1039Q1007.500 1044 1005.500 1048.500Q1007 1058 1004.500 1066.500H992Q989.500 1058 991 1048.500Q989 1044 991 1039Z" fill="#f4f4f4"/>
    <path d="M994.500 1043h2.200M1000 1043h2.200" stroke="#222" stroke-width="1.200"/><path d="M996 1047Q998.200 1048.600 1000.500 1047" fill="none" stroke="#555" stroke-width="1"/>
    <path d="M995 1054L998.200 1055.500L1001.500 1054V1058L998.200 1056.500L995 1058Z" fill="#b8442a"/><rect x="996" y="1059" width="4.500" height="3" fill="#8a5a3a" opacity=".6"/></g>
  <rect x="968" y="1077" width="60.500" height="3" fill="#85bce8"/>
  <!-- gear -->
  <g transform="translate(1072.300,1050.200)"><g fill="#fff"><rect x="-3.200" y="-14.500" width="6.400" height="29" rx="1"/><rect x="-3.200" y="-14.500" width="6.400" height="29" rx="1" transform="rotate(45)"/><rect x="-3.200" y="-14.500" width="6.400" height="29" rx="1" transform="rotate(90)"/><rect x="-3.200" y="-14.500" width="6.400" height="29" rx="1" transform="rotate(135)"/><circle r="10.800"/></g><circle r="5.400" fill="#1b1e2d"/></g>
  <rect x="1042.500" y="1077" width="60.500" height="3" fill="#85bce8"/>
  <!-- krita active -->
  <rect x="1112" y="1020" width="73" height="60" fill="#3c4152"/>
  <rect x="1112" y="1077" width="73" height="3" fill="#85bce8"/>
  <g transform="translate(1131,1032) scale(1.450)"><circle cx="12.500" cy="13" r="9.800" fill="url(#kg1)"/><circle cx="12.500" cy="13" r="9.800" fill="url(#kg2)"/><path d="M5 11Q9 17 15 18L17 15Q11 13 7 9Z" fill="#fff" opacity=".5"/><path d="M1.500 4L3.200 3L15.500 12.500L13.500 15Z" fill="#3b2a5c"/><ellipse cx="16.500" cy="15.800" rx="1.800" ry="2.600" transform="rotate(-40 16.500 15.800)" fill="#1b1b24"/></g>
</svg>
<svg style="left:1500px;top:1020px" width="420" height="60" viewBox="1500 1020 420 60">
  <path d="M1507.500 1054L1516 1045.500L1524.500 1054" fill="none" stroke="#fff" stroke-width="1.500"/>
  <!-- norton -->
  <circle cx="1547.500" cy="1049" r="6.800" fill="none" stroke="#f2b81e" stroke-width="2.800"/><path d="M1544 1048.500L1547.500 1052.500L1557.500 1039.500" fill="none" stroke="#e8e8e8" stroke-width="2"/><circle cx="1556.500" cy="1054.500" r="6" fill="#d8232a"/><rect x="1553.300" y="1053.500" width="6.400" height="5" fill="#fff"/><path d="M1554.500 1053.500V1052A2 2 0 0 1 1558.500 1052V1053.500" fill="none" stroke="#fff" stroke-width="1.200"/>
  <!-- onedrive -->
  <path d="M1580 1057.500A4.500 4.500 0 0 1 1579.500 1048.500A6.500 6.500 0 0 1 1591.500 1046A5.500 5.500 0 0 1 1599 1050.500A3.600 3.600 0 0 1 1597 1057.500Z" fill="#f0f0f0"/><path d="M1586 1049A6.500 6.500 0 0 1 1591.500 1046A5.500 5.500 0 0 1 1598.500 1049.500L1590 1053Z" fill="#a8a8a8"/>
  <!-- battery -->
  <g fill="none" stroke="#fff" stroke-width="1.500"><rect x="1617.500" y="1045.500" width="17.500" height="10.500"/><path d="M1636 1048.500V1053"/><path d="M1613 1042V1045.500M1617 1042V1045.500M1611.500 1045.500H1618.500V1048A3.500 3.500 0 0 1 1611.500 1048ZM1615 1051.500V1056H1617.500"/></g><rect x="1619.500" y="1047.500" width="13.500" height="6.500" fill="#fff"/>
  <!-- volume -->
  <g fill="none" stroke="#fff" stroke-width="1.400"><path d="M1649.500 1046.500H1653.500L1659 1041.500V1058.500L1653.500 1053.500H1649.500Z"/><path d="M1662 1046.500Q1664 1050 1662 1053.500"/><path d="M1665 1044Q1668.500 1050 1665 1056" stroke="#9a9a9a"/><path d="M1668 1042Q1672.500 1050 1668 1058" stroke="#6a6a6a"/></g>
  <!-- pen -->
  <g fill="none" stroke="#fff" stroke-width="1.500"><path d="M1707.500 1040.500Q1710 1040 1710.500 1042.500L1701 1057L1697.500 1058.500L1698 1054.500Z"/><path d="M1700 1052Q1692.500 1054 1693 1058Q1694.500 1061 1698 1058.500M1706.500 1049Q1711.500 1048.500 1711 1051Q1710 1053 1707 1052"/></g>
  <g fill="#fff" font-family="Liberation Sans, sans-serif" font-size="17.500"><text x="1783" y="1043" text-anchor="middle" textLength="41" lengthAdjust="spacingAndGlyphs">14:51</text><text x="1783" y="1071" text-anchor="middle" textLength="93" lengthAdjust="spacingAndGlyphs">03/08/2020</text></g>
  <path d="M1858.500 1039H1881.500V1056.500H1874L1870 1061L1866 1056.500H1858.500Z" fill="none" stroke="#fff" stroke-width="1.500"/>
  <rect x="1913" y="1020" width="1" height="60" fill="#6a6a72"/>
</svg>
<!-- ===== Handwritten annotation (magenta) ===== -->
<svg style="left:0;top:0" width="1920" height="1080" viewBox="0 0 1920 1080">
  <g fill="#b3165f" stroke="#b3165f" stroke-width="1.75" stroke-linejoin="round" font-family="DejaVu Sans Light, DejaVu Sans, sans-serif" font-weight="200">
    <text transform="translate(810 775) rotate(-1) skewX(-14)" font-size="40" textLength="169" lengthAdjust="spacingAndGlyphs">clique</text>
    <text transform="translate(992 773) rotate(0) skewX(-14)" font-size="39" textLength="83" lengthAdjust="spacingAndGlyphs">sur</text>
    <text transform="translate(1094 772) rotate(0) skewX(-14)" font-size="39" textLength="40" lengthAdjust="spacingAndGlyphs">ce</text>
    <text transform="translate(1155 772) rotate(-2) skewX(-14)" font-size="40" textLength="181" lengthAdjust="spacingAndGlyphs">bouton</text>
    <text transform="translate(535 821) rotate(0) skewX(-14)" font-size="30" textLength="33" lengthAdjust="spacingAndGlyphs">et</text>
    <text transform="translate(583 827) rotate(0) skewX(-14)" font-size="30" textLength="175" lengthAdjust="spacingAndGlyphs">maintien</text>
    <text transform="translate(767 823) rotate(0) skewX(-14)" font-size="40" textLength="42" lengthAdjust="spacingAndGlyphs">le</text>
    <text transform="translate(826 822) rotate(-3) skewX(-14)" font-size="30" textLength="136" lengthAdjust="spacingAndGlyphs">appuyé</text>
    <text transform="translate(973 816) rotate(0) skewX(-14)" font-size="30" textLength="41" lengthAdjust="spacingAndGlyphs">en</text>
    <text transform="translate(1023 815) rotate(-2.5) skewX(-14)" font-size="31" textLength="153" lengthAdjust="spacingAndGlyphs">glissant</text>
    <text transform="translate(1202 806) rotate(0) skewX(-14)" font-size="39" textLength="40" lengthAdjust="spacingAndGlyphs">le</text>
    <text transform="translate(1251 806) rotate(0) skewX(-14)" font-size="32" textLength="87" lengthAdjust="spacingAndGlyphs">haut,</text>
    <text transform="translate(548 869) rotate(0) skewX(-14)" font-size="30" textLength="42" lengthAdjust="spacingAndGlyphs">ça</text>
    <text transform="translate(601 869) rotate(-1) skewX(-14)" font-size="31" textLength="144" lengthAdjust="spacingAndGlyphs">devrait</text>
    <text transform="translate(756 868) rotate(-1.2) skewX(-14)" font-size="30" textLength="234" lengthAdjust="spacingAndGlyphs">augmenter</text>
    <text transform="translate(1001 863) rotate(0) skewX(-14)" font-size="31" textLength="75" lengthAdjust="spacingAndGlyphs">ton</text>
    <text transform="translate(1084 862) rotate(-3.5) skewX(-14)" font-size="30" textLength="202" lengthAdjust="spacingAndGlyphs">panneau.</text>
  </g>
  <!-- circle around the grip + arrow -->
  <g fill="none" stroke="#b3165f" stroke-linecap="round" stroke-linejoin="round">
    <path d="M980 936Q966 925 948 925Q918 928 917 950Q918 976 956 978Q996 976 997 948Q996 922 966 924Q948 925 930 932" stroke-width="4"/>
    <path d="M1031 967V903" stroke-width="2.400"/>
    <path d="M1014 922L1032 903L1048 919" stroke-width="3"/>
  </g>
</svg>
</body>
</html>
